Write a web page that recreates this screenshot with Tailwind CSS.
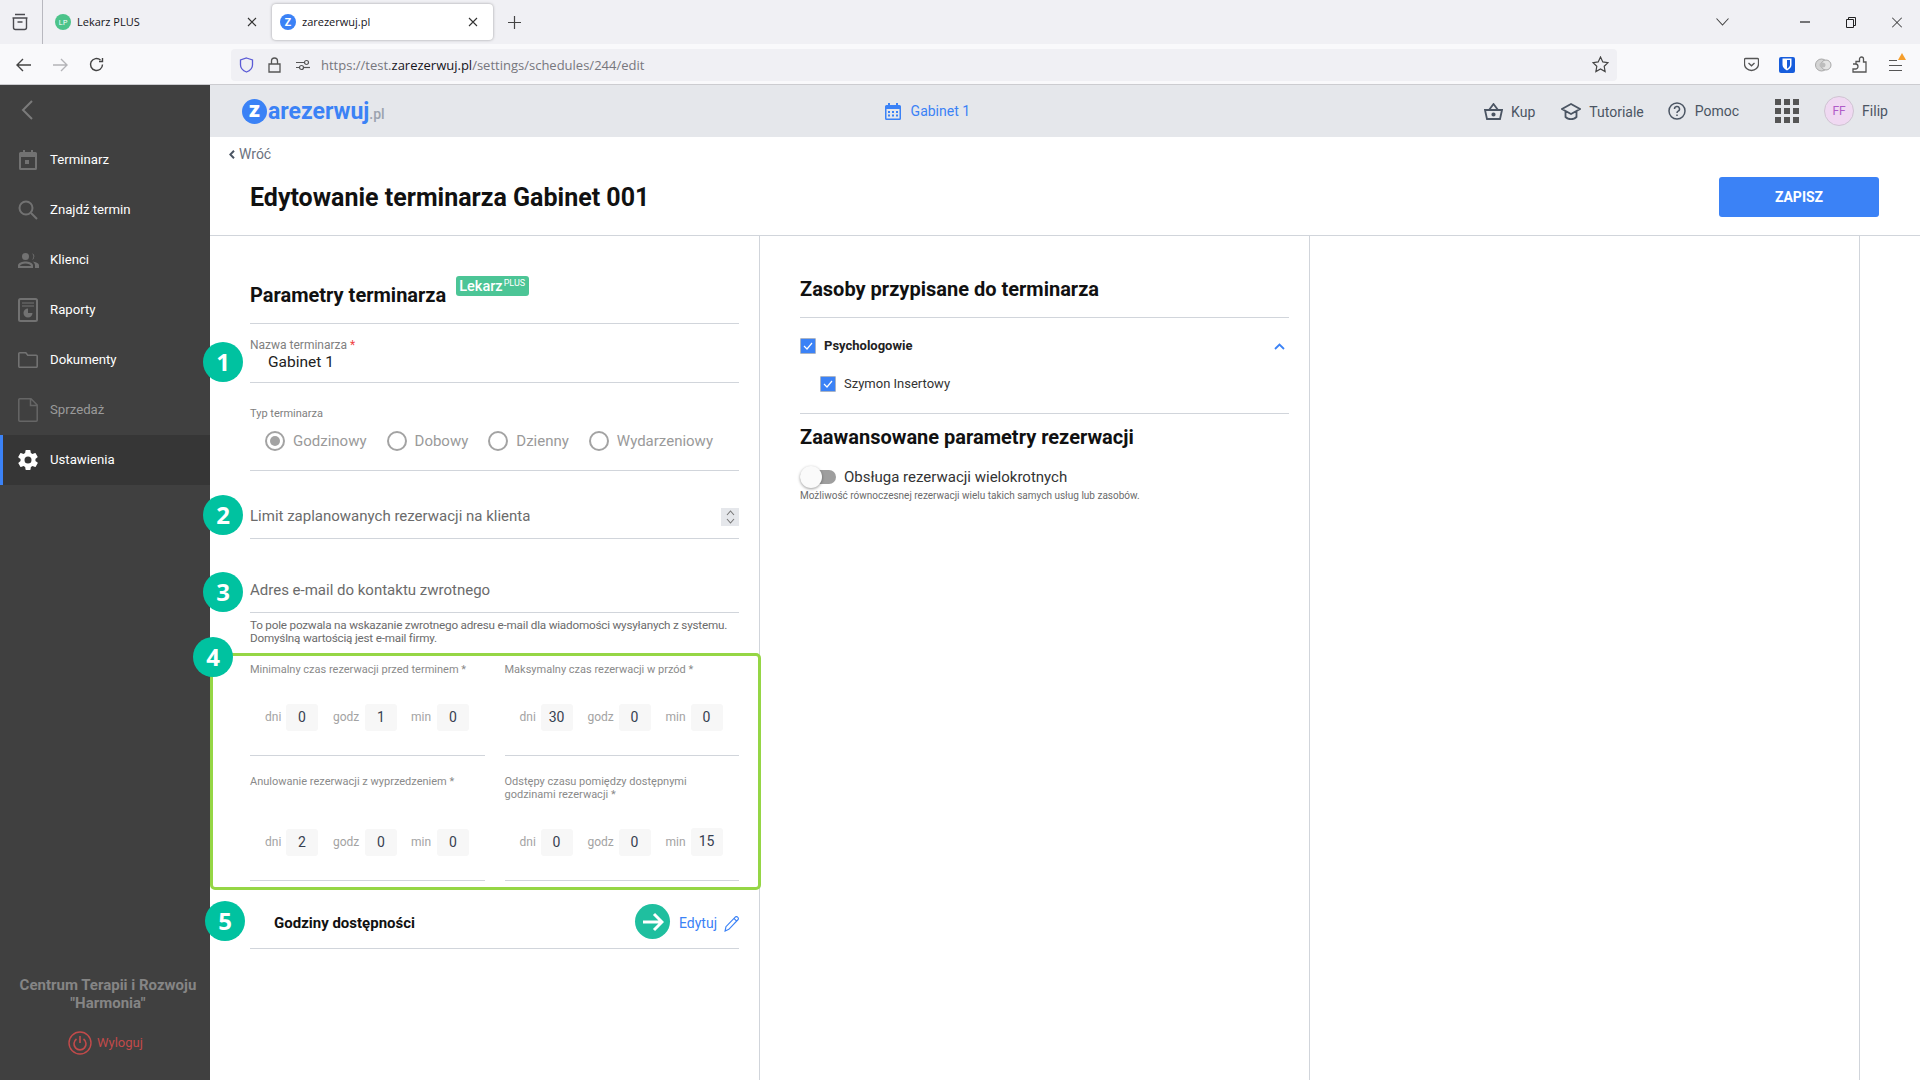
<!DOCTYPE html>
<html lang="pl">
<head>
    <meta charset="UTF-8">
    <title>zarezerwuj.pl</title>
    <script src="https://cdn.jsdelivr.net/npm/@tailwindcss/browser@4"></script>
</head>
<body class="relative h-screen overflow-hidden bg-white flex flex-col [font-family:Roboto,sans-serif]">

    <!-- browser tabs -->
    <div class="h-[44px] shrink-0 bg-[#f0f0f4] flex items-center relative [font-family:'Open_Sans',sans-serif] text-[11px] text-[#15141a]">
        <div class="w-[43px] h-full border-r border-[#b8b8bf] flex items-center justify-center">
            <svg class="w-[18px] h-[18px] -ml-[2px]" viewBox="0 0 18 18" fill="none" stroke="#4a4a4f" stroke-width="1.4"><path d="M4 1.5h10M2.5 5h13v9.5a2 2 0 0 1-2 2h-9a2 2 0 0 1-2-2zM1.5 5h15M6.5 9h5"/></svg>
        </div>
        <div class="w-[229px] h-full flex items-center pl-[12px] pr-[12px]">
            <span class="w-[16px] h-[16px] rounded-full bg-[#4cc38a] text-white text-[8px] flex items-center justify-center">LP</span>
            <span class="ml-[6px] flex-1 pt-[1px]">Lekarz PLUS</span>
            <svg class="w-[10px] h-[10px] mr-[3px]" viewBox="0 0 10 10" stroke="#333" stroke-width="1.1"><path d="M1 1l8 8M9 1l-8 8"/></svg>
        </div>
        <div class="w-[221px] h-[36px] bg-white rounded-[4px] shadow-[0_0_3px_rgba(0,0,0,0.35)] flex items-center pl-[8px] pr-[12px]">
            <span class="w-[16px] h-[16px] rounded-full bg-[#3b82f6] text-white text-[11px] font-bold flex items-center justify-center">Z</span>
            <span class="ml-[6px] flex-1 pt-[1px]">zarezerwuj.pl</span>
            <svg class="w-[10px] h-[10px] mr-[3px]" viewBox="0 0 10 10" stroke="#333" stroke-width="1.1"><path d="M1 1l8 8M9 1l-8 8"/></svg>
        </div>
        <svg class="w-[13px] h-[13px] ml-[15px]" viewBox="0 0 13 13" stroke="#444" stroke-width="1.2"><path d="M6.5 0v13M0 6.5h13"/></svg>
        <div class="ml-auto flex items-center">
            <svg class="w-[13px] h-[8px] mr-[71px]" viewBox="0 0 13 8" fill="none" stroke="#444" stroke-width="1.1"><path d="M.5.5l6 6.5 6-6.5"/></svg>
            <svg class="w-[10px] h-[2px] mr-[36px]" viewBox="0 0 10 2" stroke="#222" stroke-width="1.2"><path d="M0 1h10"/></svg>
            <svg class="w-[10px] h-[11px] mr-[36px]" viewBox="0 0 10 11" fill="none" stroke="#222" stroke-width="1"><path d="M.5 2.5h7v8h-7zM2.5 2.5V.5h7v8h-2"/></svg>
            <svg class="w-[10px] h-[11px] mr-[18px]" viewBox="0 0 10 11" stroke="#222" stroke-width="1"><path d="M0 .5l10 10M10 .5L0 10.5"/></svg>
        </div>
    </div>

    <!-- browser toolbar -->
    <div class="h-[41px] shrink-0 bg-[#f9f9fb] border-b border-[#ccccd0] flex items-center pt-[1px] [font-family:'Open_Sans',sans-serif]">
        <svg class="w-[16px] h-[14px] ml-[16px]" viewBox="0 0 16 14" fill="none" stroke="#444" stroke-width="1.4"><path d="M15 7H1.5M7 1L1 7l6 6"/></svg>
        <svg class="w-[16px] h-[14px] ml-[20px]" viewBox="0 0 16 14" fill="none" stroke="#b4b4b8" stroke-width="1.4"><path d="M1 7h13.5M9 1l6 6-6 6"/></svg>
        <svg class="w-[15px] h-[15px] ml-[21px]" viewBox="0 0 15 15" fill="none" stroke="#444" stroke-width="1.4"><path d="M13.5 7.5a6 6 0 1 1-2-4.5M13.5 1v3.5H10"/></svg>
        <div class="w-[1386px] h-[32px] ml-[127px] bg-[#f0f0f4] rounded-[4px] flex items-center">
            <svg class="w-[15px] h-[16px] ml-[8px]" viewBox="0 0 15 16" fill="none" stroke="#5b5bd6" stroke-width="1.3"><path d="M7.5 1l6 2v5c0 3.500-3 5.800-6 7-3-1.200-6-3.500-6-7V3z"/></svg>
            <svg class="w-[13px] h-[16px] ml-[14px]" viewBox="0 0 13 16" fill="none" stroke="#555" stroke-width="1.3"><path d="M1 7h11v8H1zM3.500 7V4a3 3 0 0 1 6 0v3"/></svg>
            <svg class="w-[14px] h-[12px] ml-[15px]" viewBox="0 0 14 12" fill="none" stroke="#555" stroke-width="1.2"><path d="M0 3.500h8M0 8.500h3"/><circle cx="10.500" cy="3.500" r="2"/><circle cx="5.500" cy="8.500" r="2"/><path d="M8 8.500h6"/></svg>
            <span class="ml-[11px] pt-[2px] text-[13px] text-[#77777d] whitespace-nowrap">https://test.<span class="text-[#15141a]">zarezerwuj.pl</span>/settings/schedules/244/edit</span>
            <svg class="w-[17px] h-[17px] ml-auto mr-[8px]" viewBox="0 0 17 17" fill="none" stroke="#444" stroke-width="1.2"><path d="M8.500 1l2.300 4.900 5.200.7-3.800 3.700.9 5.300-4.600-2.600-4.600 2.600.9-5.300L1 6.600l5.200-.7z"/></svg>
        </div>
        <svg class="w-[15px] h-[15px] ml-[127px]" viewBox="0 0 15 15" fill="none" stroke="#555" stroke-width="1.3"><path d="M1.500 1.500h12a1 1 0 0 1 1 1V7a7 6.500 0 0 1-14 0V2.500a1 1 0 0 1 1-1zM4.500 6l3 2.800 3-2.800"/></svg>
        <div class="w-[16px] h-[16px] ml-[20px] bg-[#175ddc] rounded-[2px] flex items-center justify-center">
            <svg class="w-[10px] h-[13px]" viewBox="0 0 10 13" fill="#fff"><path d="M.5.5h9V7c0 2.500-2.500 4.300-4.500 5.500C3 11.300.5 9.500.5 7zM5 2v8.800c1.500-1 3-2.300 3-3.800V2z" fill-rule="evenodd"/></svg>
        </div>
        <svg class="w-[17px] h-[16px] ml-[20px]" viewBox="0 0 17 16"><circle cx="6.500" cy="8" r="6" fill="#d4d4d4" stroke="#a8a8a8"/><circle cx="11" cy="8" r="5" fill="#e4e4e4" stroke="#a8a8a8"/><ellipse cx="7.500" cy="8" rx="3" ry="2.500" fill="#bdbdbd"/></svg>
        <svg class="w-[15px] h-[17px] ml-[20px]" viewBox="0 0 15 17" fill="none" stroke="#555" stroke-width="1.3"><path d="M1 8h3V5.500h3.500V3a2 2 0 0 1 4 0v3h2.500v10H1v-3h2.500a2 2 0 0 0 0-5z"/></svg>
        <div class="relative w-[13px] h-[10px] ml-[22px]">
            <div class="absolute top-0 left-0 w-[8px] h-px bg-[#555]"></div>
            <div class="absolute top-[5px] left-0 w-[13px] h-px bg-[#555]"></div>
            <div class="absolute top-[10px] left-0 w-[13px] h-px bg-[#555]"></div>
            <div class="absolute -top-[7px] -right-[4px] w-0 h-0 border-l-[4px] border-r-[4px] border-b-[7px] border-l-transparent border-r-transparent border-b-[#f59e2c]"></div>
        </div>
    </div>

    <div class="flex-1 flex min-h-0">
        <!-- sidebar -->
        <aside class="w-[210px] shrink-0 bg-[#404040] flex flex-col text-[13.2px] text-white">
            <div class="h-[50px] flex items-center pl-[21px]">
                <svg class="w-[12px] h-[20px]" viewBox="0 0 12 20" fill="none" stroke="#7b7b7b" stroke-width="2"><path d="M11 1L2 10l9 9"/></svg>
            </div>
            <a class="h-[50px] flex items-center">
                <svg class="w-[20px] h-[20px] ml-[18px]" viewBox="0 0 20 20" fill="#727272"><path d="M5 0h2v2h6V0h2v2h2.500A1.500 1.500 0 0 1 19 3.500v15a1.500 1.500 0 0 1-1.500 1.500h-15A1.500 1.500 0 0 1 1 18.500v-15A1.500 1.500 0 0 1 2.500 2H5zM3 7v11h14V7zm4 3h4v4H7z" fill-rule="evenodd"/></svg>
                <span class="ml-[12px]">Terminarz</span>
            </a>
            <a class="h-[50px] flex items-center">
                <svg class="w-[20px] h-[20px] ml-[18px]" viewBox="0 0 20 20" fill="none" stroke="#727272" stroke-width="2"><circle cx="8" cy="8" r="6.500"/><path d="M13 13l6 6"/></svg>
                <span class="ml-[12px]">Znajdź termin</span>
            </a>
            <a class="h-[50px] flex items-center">
                <svg class="w-[21px] h-[15px] ml-[18px]" viewBox="0 0 21 15" fill="#727272"><path d="M7.500 0a3.500 3.500 0 1 1 0 7 3.500 3.500 0 0 1 0-7zm6.500.2a3.500 3.500 0 0 1 0 6.600 5 5 0 0 0 0-6.600zM7.500 8.500c3 0 7.500 1.400 7.500 4V15H0v-2.500c0-2.600 4.500-4 7.500-4zm0 2c-2.500 0-5.300 1-5.500 2.500h11c-.2-1.500-3-2.500-5.500-2.500zm7 -2c2.700.3 6.500 1.500 6.500 4V15h-4v-2.500c0-1.700-1-3-2.500-4z" fill-rule="evenodd"/></svg>
                <span class="ml-[11px]">Klienci</span>
            </a>
            <a class="h-[50px] flex items-center">
                <svg class="w-[20px] h-[24px] ml-[18px]" viewBox="0 0 20 24" fill="none" stroke="#727272" stroke-width="2"><rect x="1" y="1" width="18" height="22" rx="1.500"/><path d="M4 5h12M4 8h12" stroke-width="1.200"/><path d="M10 10.500a4.500 4.500 0 1 0 4.500 4.500H10z" fill="#727272" stroke="none"/></svg>
                <span class="ml-[12px]">Raporty</span>
            </a>
            <a class="h-[50px] flex items-center">
                <svg class="w-[20px] h-[16px] ml-[18px]" viewBox="0 0 20 16" fill="none" stroke="#727272" stroke-width="1.600"><path d="M1.800.8h6l2 2.500h8.400a1 1 0 0 1 1 1v10a1 1 0 0 1-1 1H1.800a1 1 0 0 1-1-1V1.800a1 1 0 0 1 1-1z"/></svg>
                <span class="ml-[12px]">Dokumenty</span>
            </a>
            <a class="h-[50px] flex items-center text-[#9a9a9a]">
                <svg class="w-[20px] h-[24px] ml-[18px]" viewBox="0 0 20 24" fill="none" stroke="#666" stroke-width="1.500"><path d="M1.800.8H13L19.200 7v15.200a1 1 0 0 1-1 1H1.800a1 1 0 0 1-1-1V1.800a1 1 0 0 1 1-1zM12.500 1v6.500h6.500"/></svg>
                <span class="ml-[12px]">Sprzedaż</span>
            </a>
            <a class="h-[50px] flex items-center bg-[#363636] border-l-[3px] border-[#3b82f6]">
                <svg class="w-[20px] h-[20px] ml-[15px]" viewBox="2 2 20 20" fill="#fff"><path d="M19.400 13c.04-.3.1-.66.1-1s-.06-.7-.1-1l2.100-1.650a.5.5 0 0 0 .12-.64l-2-3.460a.5.5 0 0 0-.6-.22l-2.500 1a7.300 7.300 0 0 0-1.700-1l-.37-2.650A.5.5 0 0 0 14 2h-4a.5.5 0 0 0-.5.420l-.37 2.650a7.700 7.700 0 0 0-1.700 1l-2.500-1a.5.5 0 0 0-.6.220l-2 3.460a.5.5 0 0 0 .12.640L4.600 11c-.04.3-.1.66-.1 1s.06.7.1 1l-2.100 1.650a.5.5 0 0 0-.12.640l2 3.460a.5.5 0 0 0 .6.220l2.500-1c.52.4 1.080.73 1.700 1l.37 2.650A.5.5 0 0 0 10 22h4a.5.5 0 0 0 .5-.420l.37-2.650a7.700 7.700 0 0 0 1.700-1l2.500 1a.5.5 0 0 0 .6-.220l2-3.460a.5.5 0 0 0-.12-.640zM12 15.500a3.500 3.500 0 1 1 0-7 3.500 3.500 0 0 1 0 7z"/></svg>
                <span class="ml-[12px]">Ustawienia</span>
            </a>
            <div class="mt-auto pb-[25px] text-center">
                <div class="pl-[6px] text-[15px] leading-[18px] font-bold text-[#858585] whitespace-nowrap">Centrum Terapii i Rozwoju<br>"Harmonia"</div>
                <div class="mt-[19px] h-[24px] flex items-center pl-[68px] text-[13px] text-[#c24a4a]">
                    <svg class="w-[24px] h-[24px]" viewBox="0 0 24 24" fill="none" stroke="#c24a4a" stroke-width="1.400"><circle cx="12" cy="12" r="11"/><path d="M8.500 8a6 6 0 1 0 7 0M12 5v7" stroke-width="1.600"/></svg>
                    <span class="ml-[5px]">Wyloguj</span>
                </div>
            </div>
        </aside>

        <div class="flex-1 flex flex-col min-w-0">
            <!-- app header -->
            <header class="h-[52px] shrink-0 bg-[#e5e7eb] relative flex items-center text-[14px] text-[#4b5563]">
                <div class="w-[25px] h-[25px] ml-[32px] rounded-full bg-[#3b82f6] text-white text-[22px] font-black flex items-center justify-center leading-none pb-[2px]">z</div>
                <div class="ml-[1px] text-[23px] font-bold text-[#3b82f6] leading-none">arezerwuj<span class="text-[14px] font-medium text-[#9ca3af]">.pl</span></div>
                <svg class="w-[16px] h-[17px] ml-[500px]" viewBox="0 0 16 17" fill="#3b82f6"><path d="M3 0h2v2h6V0h2v2h1.500A1.500 1.500 0 0 1 16 3.500v12a1.500 1.500 0 0 1-1.500 1.500h-13A1.500 1.500 0 0 1 0 15.500v-12A1.500 1.500 0 0 1 1.500 2H3zM1.500 6v9.500h13V6zM3 8h2v2H3zm4 0h2v2H7zm4 0h2v2h-2zM3 11.500h2v2H3zm4 0h2v2H7zm4 0h2v2h-2z" fill-rule="evenodd"/></svg>
                <span class="ml-[10px] text-[#3b82f6]">Gabinet 1</span>
                <svg class="w-[19px] h-[17px] ml-[514px]" viewBox="0 0 19 17" fill="none" stroke="#4b5563" stroke-width="1.800"><path d="M1 7h17l-2 9H3zM5 7l4.500-6L14 7"/><circle cx="9.500" cy="11.500" r="1.200" fill="#4b5563"/></svg>
                <span class="ml-[8px] pt-[2px]">Kup</span>
                <svg class="w-[20px] h-[17px] ml-[26px]" viewBox="0 0 20 17" fill="none" stroke="#4b5563" stroke-width="1.800"><path d="M10 1L1 6l9 5 9-5zM4.500 8.500V14c3 3 8 3 11 0V8.500"/></svg>
                <span class="ml-[8px] pt-[2px]">Tutoriale</span>
                <svg class="w-[18px] h-[18px] ml-[24px]" viewBox="0 0 18 18" fill="none" stroke="#4b5563" stroke-width="1.500"><circle cx="9" cy="9" r="8"/><path d="M6.500 7a2.500 2.500 0 1 1 3.600 2.200c-.8.400-1.100.9-1.100 1.800M9 12.500v1.500"/></svg>
                <span class="ml-[9px]">Pomoc</span>
                <div class="ml-[36px] grid grid-cols-3 gap-[3px]">
                    <i class="w-[6px] h-[6px] bg-[#555]"></i><i class="w-[6px] h-[6px] bg-[#555]"></i><i class="w-[6px] h-[6px] bg-[#555]"></i>
                    <i class="w-[6px] h-[6px] bg-[#555]"></i><i class="w-[6px] h-[6px] bg-[#555]"></i><i class="w-[6px] h-[6px] bg-[#555]"></i>
                    <i class="w-[6px] h-[6px] bg-[#555]"></i><i class="w-[6px] h-[6px] bg-[#555]"></i><i class="w-[6px] h-[6px] bg-[#555]"></i>
                </div>
                <div class="w-[30px] h-[30px] ml-[25px] rounded-full bg-[#f0d9f2] border border-[#cfc4d2] text-[#b05cc8] text-[12px] flex items-center justify-center">FF</div>
                <span class="ml-[8px]">Filip</span>
            </header>

            <!-- page title -->
            <div class="h-[99px] shrink-0 border-b border-[#d1d5db] pt-[7px]">
                <div class="flex items-center h-[20px] pl-[19px] text-[14px] text-[#6b7280]">
                    <svg class="w-[6px] h-[9px] mr-[4px]" viewBox="0 0 6 9" fill="none" stroke="#4b5563" stroke-width="2"><path d="M5 .8L1.300 4.500 5 8.200"/></svg>
                    Wróć
                </div>
                <div class="mt-[13px] h-[40px] flex items-center justify-between pl-[40px] pr-[41px]">
                    <h1 class="pt-[2px] text-[25px] font-bold text-[#111]">Edytowanie terminarza Gabinet 001</h1>
                    <button class="w-[160px] h-[40px] bg-[#3b82f6] rounded-[3px] text-white text-[14px] font-bold">ZAPISZ</button>
                </div>
            </div>

            <div class="flex-1 flex min-h-0">
                <!-- schedule parameters -->
                <section class="w-[550px] shrink-0 border-r border-[#d1d5db] pl-[40px] pr-[20px]">
                    <div class="h-[88px] border-b border-[#d1d5db] flex items-end pb-[14px]">
                        <h2 class="text-[20px] leading-[28px] font-bold text-[#111]">Parametry terminarza</h2>
                        <div class="ml-[10px] mb-[13px] w-[73px] h-[20px] rounded-[3px] bg-[#4cc596] text-white flex pl-[3px] whitespace-nowrap">
                            <span class="pt-[1px] text-[14.500px] font-medium leading-[20px]">Lekarz</span>
                            <span class="text-[9px] leading-[9px] mt-[3px] ml-[1px]">PLUS</span>
                        </div>
                    </div>
                    <div class="h-[59px] border-b border-[#d1d5db] pt-[13px]">
                        <div class="text-[12px] leading-[16px] text-[#808080]">Nazwa terminarza <span class="text-[#ef4444]">*</span></div>
                        <div class="-mt-[1px] pl-[18px] text-[15.500px] leading-[20px] text-[#222]">Gabinet 1</div>
                    </div>
                    <div class="h-[88px] border-b border-[#d1d5db] pt-[23px]">
                        <div class="text-[11px] leading-[16px] text-[#808080]">Typ terminarza</div>
                        <div class="mt-[9px] h-[20px] flex items-center text-[15px] text-[#9a9a9a]">
                            <span class="ml-[15px] w-[20px] h-[20px] rounded-full border-2 border-[#a3a3a3] flex items-center justify-center"><i class="w-[10px] h-[10px] rounded-full bg-[#a3a3a3]"></i></span>
                            <span class="ml-[8px]">Godzinowy</span>
                            <span class="ml-[20px] w-[20px] h-[20px] rounded-full border-2 border-[#a3a3a3]"></span>
                            <span class="ml-[8px]">Dobowy</span>
                            <span class="ml-[20px] w-[20px] h-[20px] rounded-full border-2 border-[#a3a3a3]"></span>
                            <span class="ml-[8px]">Dzienny</span>
                            <span class="ml-[20px] w-[20px] h-[20px] rounded-full border-2 border-[#a3a3a3]"></span>
                            <span class="ml-[8px]">Wydarzeniowy</span>
                        </div>
                    </div>
                    <div class="h-[68px] border-b border-[#d1d5db] pt-[35px] flex justify-between items-start text-[15px] leading-[20px] text-[#6b6b6b]">
                        Limit zaplanowanych rezerwacji na klienta
                        <div class="w-[18px] h-[18px] mt-[2px] bg-[#e5e7eb] flex items-center justify-center">
                            <svg class="w-[9px] h-[14px]" viewBox="0 0 9 14" fill="none" stroke="#777" stroke-width="1.100"><path d="M1 5l3.500-4L8 5M1 9l3.500 4L8 9"/></svg>
                        </div>
                    </div>
                    <div class="h-[74px] border-b border-[#d1d5db] pt-[41px] text-[15px] leading-[20px] text-[#6b6b6b]">Adres e-mail do kontaktu zwrotnego</div>
                    <p class="pt-[6px] text-[11.700px] tracking-[-0.2px] leading-[13px] text-[#6b6b6b] whitespace-nowrap">To pole pozwala na wskazanie zwrotnego adresu e-mail dla wiadomości wysyłanych z systemu.<br>Domyślną wartością jest e-mail firmy.</p>

                    <div class="mt-[18px] grid grid-cols-2 gap-x-[20px] text-[11px] leading-[13px] text-[#8a8a8a]">
                        <div class="h-[93px] border-b border-[#d1d5db]">
                            <div class="h-[41px]">Minimalny czas rezerwacji przed terminem *</div>
                            <div class="h-[27px] flex items-center pl-[15px] text-[12px] text-[#a3a3a3]">
                                <span class="w-[16px]">dni</span><span class="ml-[5px] w-[32px] h-[27px] rounded-[3px] bg-[#f7f7f7] text-[14px] text-[#374151] flex items-center justify-center">0</span>
                                <span class="ml-[15px] w-[26px]">godz</span><span class="ml-[6px] w-[32px] h-[27px] rounded-[3px] bg-[#f7f7f7] text-[14px] text-[#374151] flex items-center justify-center">1</span>
                                <span class="ml-[14px] w-[20px]">min</span><span class="ml-[6px] w-[32px] h-[27px] rounded-[3px] bg-[#f7f7f7] text-[14px] text-[#374151] flex items-center justify-center">0</span>
                            </div>
                        </div>
                        <div class="h-[93px] border-b border-[#d1d5db]">
                            <div class="h-[41px]">Maksymalny czas rezerwacji w przód *</div>
                            <div class="h-[27px] flex items-center pl-[15px] text-[12px] text-[#a3a3a3]">
                                <span class="w-[16px]">dni</span><span class="ml-[5px] w-[32px] h-[27px] rounded-[3px] bg-[#f7f7f7] text-[14px] text-[#374151] flex items-center justify-center">30</span>
                                <span class="ml-[15px] w-[26px]">godz</span><span class="ml-[5px] w-[32px] h-[27px] rounded-[3px] bg-[#f7f7f7] text-[14px] text-[#374151] flex items-center justify-center">0</span>
                                <span class="ml-[15px] w-[20px]">min</span><span class="ml-[5px] w-[32px] h-[27px] rounded-[3px] bg-[#f7f7f7] text-[14px] text-[#374151] flex items-center justify-center">0</span>
                            </div>
                        </div>
                        <div class="mt-[19px] h-[106px] border-b border-[#d1d5db]">
                            <div class="h-[54px]">Anulowanie rezerwacji z wyprzedzeniem *</div>
                            <div class="h-[27px] flex items-center pl-[15px] text-[12px] text-[#a3a3a3]">
                                <span class="w-[16px]">dni</span><span class="ml-[5px] w-[32px] h-[27px] rounded-[3px] bg-[#f7f7f7] text-[14px] text-[#374151] flex items-center justify-center">2</span>
                                <span class="ml-[15px] w-[26px]">godz</span><span class="ml-[6px] w-[32px] h-[27px] rounded-[3px] bg-[#f7f7f7] text-[14px] text-[#374151] flex items-center justify-center">0</span>
                                <span class="ml-[14px] w-[20px]">min</span><span class="ml-[6px] w-[32px] h-[27px] rounded-[3px] bg-[#f7f7f7] text-[14px] text-[#374151] flex items-center justify-center">0</span>
                            </div>
                        </div>
                        <div class="mt-[19px] h-[106px] border-b border-[#d1d5db]">
                            <div class="h-[54px]">Odstępy czasu pomiędzy dostępnymi<br>godzinami rezerwacji *</div>
                            <div class="h-[27px] flex items-center pl-[15px] text-[12px] text-[#a3a3a3]">
                                <span class="w-[16px]">dni</span><span class="ml-[5px] w-[32px] h-[27px] rounded-[3px] bg-[#f7f7f7] text-[14px] text-[#374151] flex items-center justify-center">0</span>
                                <span class="ml-[15px] w-[26px]">godz</span><span class="ml-[5px] w-[32px] h-[27px] rounded-[3px] bg-[#f7f7f7] text-[14px] text-[#374151] flex items-center justify-center">0</span>
                                <span class="ml-[15px] w-[20px]">min</span><span class="ml-[5px] w-[32px] h-[28px] -mt-[2px] rounded-[3px] bg-[#f7f7f7] text-[14px] text-[#374151] flex items-center justify-center">15</span>
                            </div>
                        </div>
                    </div>

                    <div class="h-[68px] border-b border-[#d1d5db] pt-[18px] flex items-center">
                        <span class="ml-[24px] text-[15px] font-bold text-[#111]">Godziny dostępności</span>
                        <span class="ml-auto text-[14px] text-[#3b82f6]">Edytuj</span>
                        <svg class="w-[15px] h-[16px] ml-[7px]" viewBox="0 0 14 15" fill="none" stroke="#3b82f6" stroke-width="1.100"><path d="M1 14l.8-4L10.500 1a1.500 1.500 0 0 1 2.200 0l.3.300a1.500 1.500 0 0 1 0 2.200L4.500 12.500zM9.500 2.500l2.500 2.500"/></svg>
                    </div>
                </section>

                <!-- resources -->
                <section class="w-[550px] shrink-0 border-r border-[#d1d5db] pl-[40px] pr-[20px]">
                    <div class="h-[82px] border-b border-[#d1d5db] pt-[39px]">
                        <h2 class="text-[20px] leading-[28px] font-bold text-[#111]">Zasoby przypisane do terminarza</h2>
                    </div>
                    <div class="mt-[18px] h-[20px] flex items-center text-[13px] font-bold text-[#222]">
                        <span class="w-[16px] h-[16px] bg-[#3b82f6] border border-[#a9b4c6] rounded-[1px] flex items-center justify-center">
                            <svg class="w-[10px] h-[8px]" viewBox="0 0 10 8" fill="none" stroke="#fff" stroke-width="1.200"><path d="M1 4l3 3 5-6"/></svg>
                        </span>
                        <span class="ml-[8px]">Psychologowie</span>
                        <svg class="w-[11px] h-[7px] ml-auto mr-[4px]" viewBox="0 0 11 7" fill="none" stroke="#3b82f6" stroke-width="1.800"><path d="M1 6l4.500-4.500L10 6"/></svg>
                    </div>
                    <div class="mt-[18px] h-[20px] flex items-center pl-[20px] text-[13px] text-[#333]">
                        <span class="w-[16px] h-[16px] bg-[#3b82f6] border border-[#a9b4c6] rounded-[1px] flex items-center justify-center">
                            <svg class="w-[10px] h-[8px]" viewBox="0 0 10 8" fill="none" stroke="#fff" stroke-width="1.200"><path d="M1 4l3 3 5-6"/></svg>
                        </span>
                        <span class="ml-[8px]">Szymon Insertowy</span>
                    </div>
                    <div class="mt-[19px] border-b border-[#d1d5db]"></div>
                    <h2 class="mt-[9px] text-[20px] leading-[28px] font-bold text-[#111]">Zaawansowane parametry rezerwacji</h2>
                    <div class="mt-[16px] h-[20px] flex items-center relative text-[15px] text-[#333]">
                        <span class="w-[36px] h-[14px] rounded-full bg-[#9e9e9e]"></span>
                        <span class="absolute left-0 top-[-1px] w-[22px] h-[22px] rounded-full bg-[#fafafa] shadow-[0_1px_3px_rgba(0,0,0,0.4)]"></span>
                        <span class="ml-[8px]">Obsługa rezerwacji wielokrotnych</span>
                    </div>
                    <p class="mt-[3px] text-[10px] leading-[12px] text-[#6b6b6b] whitespace-nowrap">Możliwość równoczesnej rezerwacji wielu takich samych usług lub zasobów.</p>
                </section>

                <section class="w-[550px] shrink-0 border-r border-[#d1d5db]"></section>
            </div>
        </div>
    </div>

    <!-- annotations lying over the screenshot -->
    <div class="absolute left-[210px] top-[653px] w-[551px] h-[237px] border-[3px] border-[#95d645] rounded-[5px]"></div>
    <div class="absolute left-[203px] top-[342px] w-[40px] h-[40px] rounded-full bg-[#00c2a0] text-white text-[24px] font-bold [font-family:'Open_Sans',sans-serif] flex items-center justify-center">1</div>
    <div class="absolute left-[203px] top-[495px] w-[40px] h-[40px] rounded-full bg-[#00c2a0] text-white text-[24px] font-bold [font-family:'Open_Sans',sans-serif] flex items-center justify-center">2</div>
    <div class="absolute left-[203px] top-[572px] w-[40px] h-[40px] rounded-full bg-[#00c2a0] text-white text-[24px] font-bold [font-family:'Open_Sans',sans-serif] flex items-center justify-center">3</div>
    <div class="absolute left-[193px] top-[637px] w-[40px] h-[40px] rounded-full bg-[#00c2a0] text-white text-[24px] font-bold [font-family:'Open_Sans',sans-serif] flex items-center justify-center">4</div>
    <div class="absolute left-[205px] top-[901px] w-[40px] h-[40px] rounded-full bg-[#00c2a0] text-white text-[24px] font-bold [font-family:'Open_Sans',sans-serif] flex items-center justify-center">5</div>
    <div class="absolute left-[635px] top-[904px] w-[35px] h-[35px] rounded-full bg-[#1fbf9f] flex items-center justify-center">
        <svg class="w-[22px] h-[20px]" viewBox="0 0 22 20" fill="none" stroke="#fff" stroke-width="3"><path d="M1 10h19M12 2l8 8-8 8"/></svg>
    </div>
</body>
</html>
